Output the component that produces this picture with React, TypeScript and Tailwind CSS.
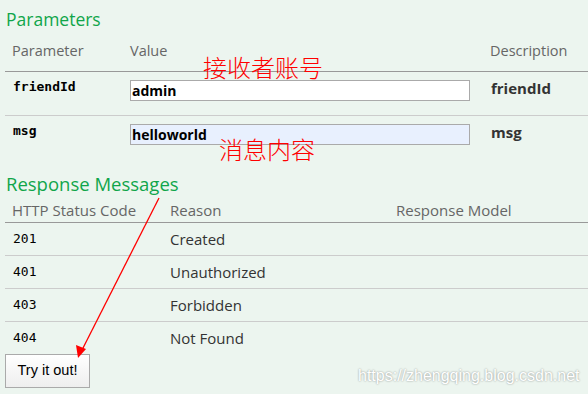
const sans = "font-['Open_Sans','Noto_Sans',sans-serif]";
const mono = "font-['DejaVu_Sans_Mono',monospace]";

const responses = [
  { code: "201", reason: "Created" },
  { code: "401", reason: "Unauthorized" },
  { code: "403", reason: "Forbidden" },
  { code: "404", reason: "Not Found" },
];

const ParamRow = ({
  name,
  value,
  autofill,
  height,
  border,
}: {
  name: string;
  value: string;
  autofill?: boolean;
  height: string;
  border?: boolean;
}) => (
  <div
    className={`grid grid-cols-[125px_360px_1fr] ${height} ${
      border ? "border-b border-[#cccccc]" : ""
    }`}
  >
    <div className={`pl-[8px] pt-[5px] leading-[20px] text-[13px] font-bold text-black ${mono}`}>
      {name}
    </div>
    <div className="pt-[6px]">
      <input
        readOnly
        value={value}
        className={`h-[21px] w-[340px] border border-[#aaaaaa] px-[1px] text-[14px] font-bold text-black outline-none ${sans} ${
          autofill ? "bg-[#e8f0fe]" : "bg-white"
        }`}
      />
    </div>
    <div className="pt-[6px] pl-[1px] leading-[20px] text-[15px] font-bold text-[#333333]">
      {name}
    </div>
  </div>
);

export default function App() {
  return (
    <div className={`relative h-[394px] w-[588px] overflow-hidden bg-[#ecf5ef] pl-[5px] ${sans}`}>
      {/* Parameters */}
      <div className="h-[38px] pl-[1px] pt-[7px] text-[17.5px] leading-[24px] text-[#10a54a]">Parameters</div>
      <div className="grid h-[34px] grid-cols-[125px_360px_1fr] border-b border-[#999999] pt-[3px] text-[14.5px] leading-[20px] text-[#666666]">
        <div className="pl-[7px]">Parameter</div>
        <div>Value</div>
        <div>Description</div>
      </div>
      <ParamRow name="friendId" value="admin" height="h-[44px]" border />
      <ParamRow name="msg" value="helloworld" height="h-[50px]" autofill />

      {/* Response Messages */}
      <div className="h-[32px] pl-[1px] pt-[6px] text-[18.5px] leading-[24px] text-[#10a54a]">Response Messages</div>
      <div className="grid h-[25px] grid-cols-[165px_226px_1fr] border-b border-[#999999] pt-[2px] text-[15px] leading-[20px] text-[#666666]">
        <div className="pl-[7px]">HTTP Status Code</div>
        <div>Reason</div>
        <div>Response Model</div>
      </div>
      {responses.map((r, i) => (
        <div
          key={r.code}
          className={`grid grid-cols-[165px_226px_1fr] items-center ${
            i < responses.length - 1 ? "h-[33px] border-b border-[#cccccc]" : "h-[32px]"
          }`}
        >
          <div className={`pl-[8px] text-[13px] text-black ${mono}`}>{r.code}</div>
          <div className="text-[15px] text-[#333333]">{r.reason}</div>
          <div />
        </div>
      ))}
      <button className="h-[34px] w-[85px] border border-[#aaaaaa] bg-gradient-to-b from-white to-[#eeeeee] font-['Liberation_Sans',Arial,sans-serif] text-[14.5px] text-black">
        Try it out!
      </button>

      {/* annotations */}
      <div className="absolute left-[203px] top-[52px] font-['Noto_Sans_CJK_SC',serif] text-[24px] font-light leading-[30px] text-[#ff0000]">
        接收者账号
      </div>
      <div className="absolute left-[219px] top-[134px] font-['Noto_Sans_CJK_SC',serif] text-[24px] font-light leading-[30px] text-[#ff0000]">
        消息内容
      </div>
      <svg className="pointer-events-none absolute left-0 top-0" width="588" height="394">
        <line x1="159" y1="198" x2="82" y2="350" stroke="#ff0000" strokeWidth="1.3" />
        <polygon points="78,358 76,345 86,349" fill="#ff0000" />
      </svg>
      <div className="absolute left-[358px] top-[366px] font-['Liberation_Sans',Arial,sans-serif] text-[16px] leading-[20px] text-white [text-shadow:0_0_2px_rgba(0,0,0,0.45)]">
        https://zhengqing.blog.csdn.net
      </div>
    </div>
  );
}
